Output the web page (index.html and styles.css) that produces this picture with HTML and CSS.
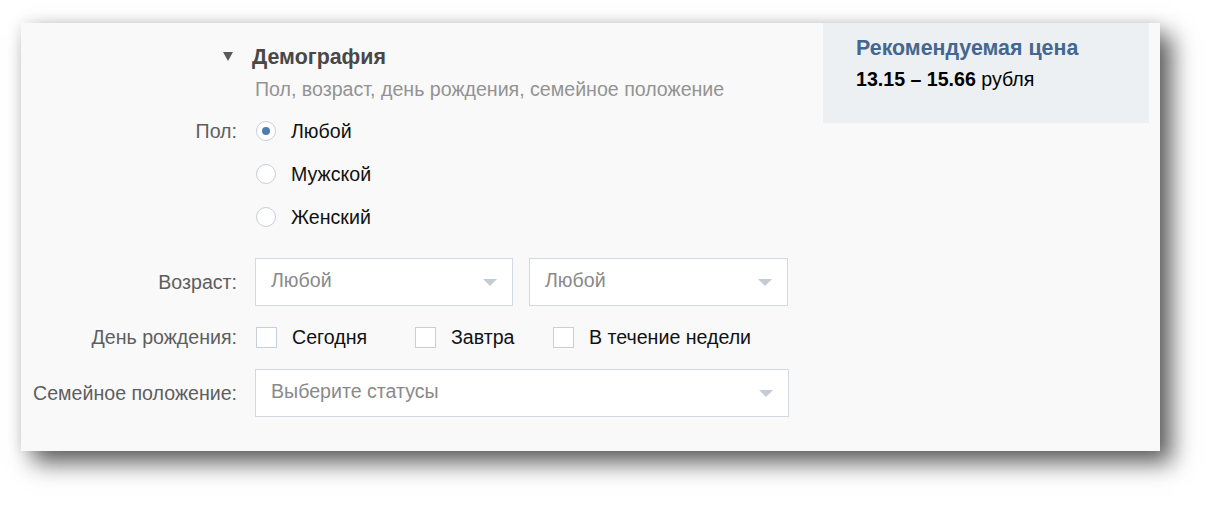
FILE: index.html
```html
<!DOCTYPE html>
<html lang="ru">
<head>
<meta charset="utf-8">
<title>Демография</title>
<link rel="stylesheet" href="styles.css">
</head>
<body>
<div class="panel">
  <div class="form">
    <div class="label head-arrow"><span class="tri"></span></div>
    <div class="head">
      <div class="title">Демография</div>
      <div class="subtitle">Пол, возраст, день рождения, семейное положение</div>
    </div>

    <div class="label label-top row-sex">Пол:</div>
    <div class="radios row-sex">
      <div class="radio-item"><span class="radio on"></span><span class="opt">Любой</span></div>
      <div class="radio-item"><span class="radio"></span><span class="opt">Мужской</span></div>
      <div class="radio-item"><span class="radio"></span><span class="opt">Женский</span></div>
    </div>

    <div class="label row-age">Возраст:</div>
    <div class="selects row-age">
      <div class="select half"><span class="ph">Любой</span><span class="arrow"></span></div>
      <div class="select half"><span class="ph">Любой</span><span class="arrow"></span></div>
    </div>

    <div class="label row-bd">День рождения:</div>
    <div class="checks row-bd">
      <div class="check-item w1"><span class="check"></span><span class="opt">Сегодня</span></div>
      <div class="check-item w2"><span class="check"></span><span class="opt">Завтра</span></div>
      <div class="check-item"><span class="check"></span><span class="opt">В течение недели</span></div>
    </div>

    <div class="label row-st">Семейное положение:</div>
    <div class="row-st">
      <div class="select full"><span class="ph">Выберите статусы</span><span class="arrow"></span></div>
    </div>
  </div>

  <div class="price">
    <div class="price-title">Рекомендуемая цена</div>
    <div class="price-value"><b>13.15 – 15.66</b> рубля</div>
  </div>
</div>
</body>
</html>
```

FILE: styles.css
```css
html, body {
  margin: 0;
  padding: 0;
  background: #ffffff;
}
body {
  font-family: "Liberation Sans", Arial, sans-serif;
  font-size: 19.6px;
  padding: 23px 0 0 21px;
  height: 506px;
  box-sizing: border-box;
  overflow: hidden;
}
.panel {
  width: 1139px;
  height: 428px;
  background: #f9f9f9;
  box-shadow: 12px 12px 22px rgba(0, 0, 0, 0.62), 0 0 14px rgba(0, 0, 0, 0.10);
  display: flex;
  justify-content: space-between;
  align-items: flex-start;
}
.form {
  display: grid;
  grid-template-columns: 216px 534px;
  column-gap: 18px;
  align-items: center;
  padding-top: 23px;
}
.label {
  text-align: right;
  color: #5e5e5e;
  line-height: 30px;
}
.label-top {
  align-self: start;
}
.head-arrow {
  align-self: start;
  height: 22px;
  display: flex;
  justify-content: flex-end;
  align-items: center;
  padding-right: 4px;
}
.tri {
  width: 0;
  height: 0;
  border-left: 5.5px solid transparent;
  border-right: 5.5px solid transparent;
  border-top: 9px solid #5a5a5a;
  margin-top: -2px;
}
.head {
  margin-left: -3px;
}
.title {
  font-weight: bold;
  font-size: 21.4px;
  line-height: 22px;
  color: #484848;
}
.subtitle {
  margin-top: 10px;
  margin-left: 3px;
  line-height: 22px;
  color: #939393;
}
.row-sex {
  margin-top: 16px;
}
.radios {
  display: flex;
  flex-direction: column;
  gap: 13px;
}
.radio-item, .check-item {
  display: flex;
  align-items: center;
  height: 30px;
}
.radio {
  width: 18px;
  height: 18px;
  border: 1px solid #c6cfd9;
  border-radius: 50%;
  background: #ffffff;
  margin-left: 1px;
  margin-right: 15px;
  display: flex;
  align-items: center;
  justify-content: center;
  flex: none;
}
.radio.on::after {
  content: "";
  width: 8px;
  height: 8px;
  border-radius: 50%;
  background: #4f7cad;
}
.opt {
  color: #111111;
}
.row-age {
  margin-top: 26px;
}
.selects {
  display: flex;
  gap: 16px;
}
.select {
  height: 48px;
  box-sizing: border-box;
  background: #ffffff;
  border: 1px solid #d3d9de;
  display: flex;
  align-items: center;
  justify-content: space-between;
  padding: 0 15px 0 15px;
}
.select.half {
  width: 258px;
}
.select.half:last-child {
  width: 259px;
}
.select.full {
  width: 534px;
}
.ph {
  color: #8a8a8a;
  margin-top: -4px;
}
.arrow {
  width: 0;
  height: 0;
  border-left: 7px solid transparent;
  border-right: 7px solid transparent;
  border-top: 7px solid #c3cbd4;
}
.row-bd {
  margin-top: 16px;
}
.checks {
  display: flex;
}
.check-item.w1 {
  width: 159px;
}
.check-item.w2 {
  width: 138px;
}
.check {
  width: 19px;
  height: 19px;
  border: 1px solid #c5d0db;
  background: #ffffff;
  margin-left: 1px;
  margin-right: 15px;
  flex: none;
}
.row-st {
  margin-top: 17px;
}
.price {
  width: 326px;
  height: 100px;
  margin-right: 11px;
  background: #edf0f3;
  box-sizing: border-box;
  padding: 14px 0 0 33px;
}
.price-title {
  font-weight: bold;
  font-size: 21.4px;
  line-height: 22px;
  color: #45678f;
}
.price-value {
  margin-top: 9px;
  line-height: 22px;
  color: #000000;
}
```
